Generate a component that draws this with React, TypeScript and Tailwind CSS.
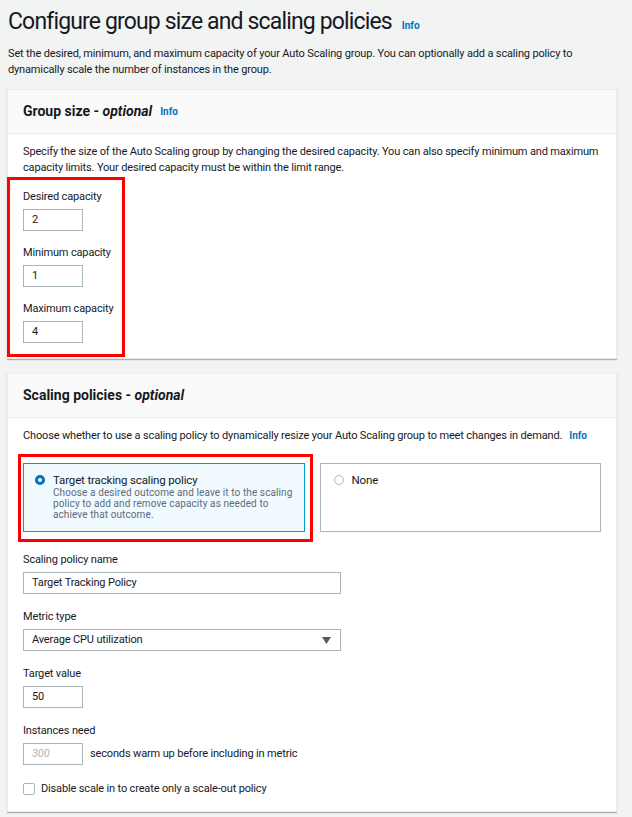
import React from "react";

function Info() {
  return <span className="text-[10px] font-bold text-[#0073bb] tracking-normal">Info</span>;
}

function Field({ label, value, wide }: { label: string; value: string; wide?: boolean }) {
  return (
    <div>
      <div className="leading-[16px]">{label}</div>
      <div
        className={
          "mt-[4px] h-[22px] border border-[#aab7b8] bg-white px-[8px] flex items-center " +
          (wide ? "w-[318px]" : "w-[60px]")
        }
      >
        {value}
      </div>
    </div>
  );
}

export default function App() {
  return (
    <div className="min-h-screen bg-[#f2f3f3] pl-[7px] pr-[15px] pt-[7px] font-['Roboto',sans-serif] text-[11px] tracking-[-0.15px] text-[#16191f]">
      <div className="ml-[1px] flex items-baseline gap-[10px]">
        <h1 className="text-[23px] leading-[30px] font-normal tracking-[-0.85px]">
          Configure group size and scaling policies
        </h1>
        <Info />
      </div>
      <p className="ml-[1px] mt-[9px] leading-[16px] whitespace-nowrap">
        Set the desired, minimum, and maximum capacity of your Auto Scaling group. You can optionally add a scaling policy to
        <br />
        dynamically scale the number of instances in the group.
      </p>

      {/* Group size */}
      <section className="mt-[11px] border border-[#eaeded] bg-white shadow-[0_1px_1px_0_rgba(0,28,36,0.3)]">
        <div className="h-[44px] bg-[#fafafa] border-b border-[#eaeded] px-[15px] flex items-center gap-[8px]">
          <h2 className="text-[14px] font-bold tracking-[0px]">
            Group size - <i>optional</i>
          </h2>
          <Info />
        </div>
        <div className="px-[15px] pt-[10px] pb-[1px]">
          <p className="leading-[16px] whitespace-nowrap">
            Specify the size of the Auto Scaling group by changing the desired capacity. You can also specify minimum and maximum
            <br />
            capacity limits. Your desired capacity must be within the limit range.
          </p>
          <div className="mt-[1px] -ml-[16px] w-[118px] border-[3px] border-[#ff0000] pl-[13px] pt-[9px] pb-[11px] flex flex-col gap-[14px]">
            <Field label="Desired capacity" value="2" />
            <Field label="Minimum capacity" value="1" />
            <Field label="Maximum capacity" value="4" />
          </div>
        </div>
      </section>

      {/* Scaling policies */}
      <section className="mt-[14px] border border-[#eaeded] bg-white shadow-[0_1px_1px_0_rgba(0,28,36,0.3)]">
        <div className="h-[44px] bg-[#fafafa] border-b border-[#eaeded] px-[15px] flex items-center">
          <h2 className="text-[14px] font-bold tracking-[0px]">
            Scaling policies - <i>optional</i>
          </h2>
        </div>
        <div className="px-[15px] pt-[10px] pb-[14px]">
          <p className="leading-[16px] whitespace-nowrap">
            Choose whether to use a scaling policy to dynamically resize your Auto Scaling group to meet changes in demand.
            <span className="ml-[7px]">
              <Info />
            </span>
          </p>

          <div className="mt-[19px] grid grid-cols-2 gap-[15px]">
            <div className="relative">
              <div className="h-[69px] border border-[#00a1c9] bg-[#f1faff] pl-[11px] pt-[9px] flex gap-[8px]">
                <span className="mt-[2px] h-[10px] w-[10px] rounded-full bg-[#0073bb] flex items-center justify-center shrink-0">
                  <span className="h-[4px] w-[4px] rounded-full bg-white" />
                </span>
                <div>
                  <div className="text-[11.5px] leading-[14px]">Target tracking scaling policy</div>
                  <div className="text-[10px] leading-[11px] text-[#5f6b7a] tracking-[0.1px]">
                    Choose a desired outcome and leave it to the scaling
                    <br />
                    policy to add and remove capacity as needed to
                    <br />
                    achieve that outcome.
                  </div>
                </div>
              </div>
              <div className="pointer-events-none absolute -left-[5px] -top-[9px] -right-[8px] -bottom-[10px] border-[3px] border-[#ff0000]" />
            </div>
            <div className="h-[69px] border border-[#aab7b8] bg-white pl-[13px] pt-[9px] flex gap-[8px]">
              <span className="mt-[2px] h-[10px] w-[10px] rounded-full border border-[#aab7b8] bg-white shrink-0" />
              <div className="text-[11.5px] leading-[14px]">None</div>
            </div>
          </div>

          <div className="mt-[20px] flex flex-col gap-[15px]">
            <Field label="Scaling policy name" value="Target Tracking Policy" wide />
            <div>
              <div className="leading-[16px]">Metric type</div>
              <div className="mt-[4px] h-[22px] w-[318px] border border-[#aab7b8] bg-white pl-[8px] pr-[9px] flex items-center justify-between">
                <span>Average CPU utilization</span>
                <svg width="9" height="7" viewBox="0 0 9 7">
                  <path d="M0 0 H9 L4.5 7 Z" fill="#545b64" />
                </svg>
              </div>
            </div>
            <Field label="Target value" value="50" />
            <div>
              <div className="leading-[16px]">Instances need</div>
              <div className="mt-[4px] flex items-center gap-[7px]">
                <div className="h-[22px] w-[60px] border border-[#aab7b8] bg-white px-[8px] flex items-center italic text-[#aab7b8]">
                  300
                </div>
                <span>seconds warm up before including in metric</span>
              </div>
            </div>
          </div>

          <label className="mt-[16px] flex items-center gap-[6px] leading-[16px]">
            <span className="h-[12px] w-[12px] rounded-[2px] border border-[#aab7b8] bg-white" />
            <span>Disable scale in to create only a scale-out policy</span>
          </label>
        </div>
      </section>
    </div>
  );
}
